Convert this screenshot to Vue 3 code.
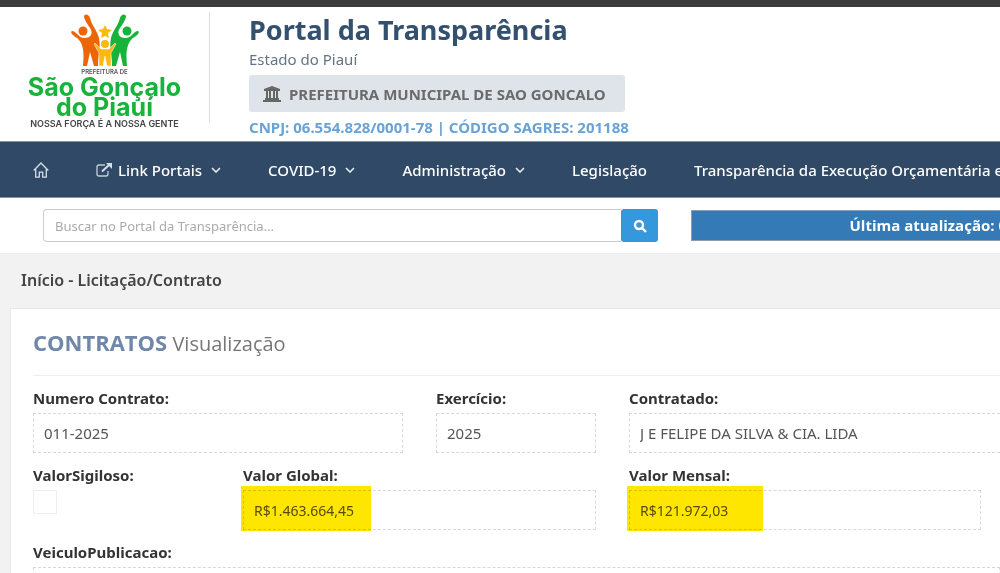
<template>
  <div class="page">
    <div class="topbar"></div>

    <header class="header">
      <div class="brand">
        <svg class="brand-mark" viewBox="0 0 68 54" role="img" aria-label="Três pessoas de braços erguidos">
          <g fill="#ec6608">
            <circle cx="12" cy="17" r="4.500" />
            <path d="M13 3c0-4 5-3 6 1 2 8 7 12 9 20 2 9-1 18-1 28h-4l-4-14-3 14h-4c1-11 1-20-4-26-2-3-7-4-8-8 1-2 3-1 5 1 3 3 5 5 9 5 7 0 8-6 5-10-3-4-5-8-6-11z" />
          </g>
          <g fill="#17b33a">
            <circle cx="56" cy="17" r="4.500" />
            <path d="M55 3c0-4-5-3-6 1-2 8-7 12-9 20-2 9 1 18 1 28h4l4-14 3 14h4c-1-11-1-20 4-26 2-3 7-4 8-8-1-2-3-1-5 1-3 3-5 5-9 5-7 0-8-6-5-10 3-4 5-8 6-11z" />
          </g>
          <g fill="#fdb913">
            <path d="M34 11l2 4 5 1-4 3 1 5-4-2-4 2 1-5-4-3 5-1z" />
            <circle cx="34" cy="30" r="4" />
            <path d="M24 29l6 6h8l6-6 1 1-5 9v13h-4l-2-10-2 10h-4V39l-5-9z" stroke="#fff" stroke-width=".5" />
          </g>
        </svg>
        <span class="brand-small">PREFEITURA DE</span>
        <span class="brand-name">São Gonçalo</span>
        <span class="brand-name">do Piauí</span>
        <span class="brand-motto">NOSSA FORÇA É A NOSSA GENTE</span>
      </div>

      <div class="heading">
        <h1>Portal da Transparência</h1>
        <p class="state">Estado do Piauí</p>
        <div class="entity">
          <svg viewBox="0 0 18 16" width="18" height="16" fill="#666" aria-hidden="true">
            <path d="M9 0l8 3v2H1V3zM3 5h2v7H3zM6 5h2v7H6zM10 5h2v7h-2zM13 5h2v7h-2zM2 12h14v2H2zM0 14h18v2H0z" />
          </svg>
          PREFEITURA MUNICIPAL DE SAO GONCALO
        </div>
        <p class="codes">CNPJ: 06.554.828/0001-78 | CÓDIGO SAGRES: 201188</p>
      </div>
    </header>

    <nav class="nav">
      <a href="#" aria-label="Início">
        <svg viewBox="0 0 16 16" width="16" height="16" fill="none" stroke="#d5dde6" stroke-width="1.300" aria-hidden="true">
          <path d="M.7 8.500L8 1l7.300 7.500M2.700 7v8.200h3.600v-5h3.400v5h3.600V7" />
        </svg>
      </a>
      <a v-for="item in menu" :key="item.text" href="#">
        <svg v-if="item.external" viewBox="0 0 16 14" width="16" height="14" aria-hidden="true">
          <path d="M9 2H3a2 2 0 0 0-2 2v7a2 2 0 0 0 2 2h7a2 2 0 0 0 2-2V8" fill="none" stroke="#c3ced9" stroke-width="1.300" />
          <path d="M6 8.500L13.500 1.500" stroke="#d5dde6" stroke-width="2" />
          <path d="M10 0h6v6z" fill="#d5dde6" />
        </svg>
        {{ item.text }}
        <svg v-if="item.dropdown" class="chevron" viewBox="0 0 10 6" width="10" height="6" aria-hidden="true">
          <path d="M1 1l4 4 4-4" fill="none" stroke="#e6ebf0" stroke-width="1.600" />
        </svg>
      </a>
    </nav>

    <div class="tools">
      <form class="search" @submit.prevent>
        <input v-model="query" type="text" aria-label="Buscar" placeholder="Buscar no Portal da Transparência..." />
        <button type="submit" aria-label="Buscar">
          <svg viewBox="0 0 14 14" width="14" height="14" fill="none" stroke="#fff" stroke-width="2.400" aria-hidden="true">
            <circle cx="6" cy="6" r="4" />
            <path d="M9 9l4 4" />
          </svg>
        </button>
      </form>
      <div class="updated"><span>Última atualização: 0</span></div>
    </div>

    <main class="content">
      <div class="breadcrumb">Início - Licitação/Contrato</div>

      <section class="panel">
        <h2><strong>CONTRATOS</strong> Visualização</h2>

        <div class="row row-contract">
          <div v-for="field in contract" :key="field.id" class="field">
            <label :for="field.id">{{ field.label }}</label>
            <input :id="field.id" type="text" :value="field.value" readonly />
          </div>
        </div>

        <div class="row row-values">
          <div class="field">
            <label for="sigiloso">ValorSigiloso:</label>
            <input id="sigiloso" type="checkbox" />
          </div>
          <div v-for="field in amounts" :key="field.id" class="field amount">
            <label :for="field.id">{{ field.label }}</label>
            <input :id="field.id" type="text" :value="field.value" readonly />
            <span class="marker" :style="{ width: field.mark + 'px' }"></span>
          </div>
        </div>

        <div class="row">
          <div class="field">
            <label for="veiculo">VeiculoPublicacao:</label>
            <input id="veiculo" class="wide" type="text" readonly />
          </div>
        </div>
      </section>
    </main>
  </div>
</template>

<script setup>
import { ref } from "vue";

const query = ref("");

// itens do menu principal
const menu = [
  { text: "Link Portais", external: true, dropdown: true },
  { text: "COVID-19", dropdown: true },
  { text: "Administração", dropdown: true },
  { text: "Legislação" },
  { text: "Transparência da Execução Orçamentária e" },
];

const contract = [
  { id: "numero", label: "Numero Contrato:", value: "011-2025" },
  { id: "exercicio", label: "Exercício:", value: "2025" },
  { id: "contratado", label: "Contratado:", value: "J E FELIPE DA SILVA & CIA. LIDA" },
];

// mark: largura do marca-texto
const amounts = [
  { id: "global", label: "Valor Global:", value: "R$1.463.664,45", mark: 130 },
  { id: "mensal", label: "Valor Mensal:", value: "R$121.972,03", mark: 136 },
];
</script>

<style>
body {
  background: #f2f2f2;
  overflow: hidden;
}
</style>

<style scoped>
* {
  box-sizing: border-box;
}

.page {
  font-family: "Noto Sans", "Open Sans", sans-serif;
  font-size: 14px;
  color: #444;
}

.topbar {
  height: 7px;
  background: #3c3c3c;
}

.header {
  display: flex;
  padding: 5px 0 4px;
  background: #fff;
}

.brand {
  display: flex;
  flex-direction: column;
  align-items: center;
  flex: none;
  width: 210px;
  height: 111px;
  border-right: 1px solid #ddd;
}

.brand > * {
  flex: none;
}

.brand-mark {
  width: 68px;
  height: 54px;
  margin-top: 2px;
}

.brand-small {
  margin-bottom: 2px;
  font: 600 6px/7px Inter, sans-serif;
  color: #555;
}

.brand-name {
  font: 700 25px/20px Inter, sans-serif;
  color: #17b33a;
}

.brand-motto {
  margin-top: 2px;
  font: 600 9px/10px Inter, sans-serif;
  color: #444;
}

.heading {
  padding-left: 39px;
  white-space: nowrap;
}

h1 {
  margin: 0;
  font-size: 27px;
  line-height: 36px;
  color: #34506f;
}

.state {
  margin: 0;
  font-size: 15px;
  line-height: 22px;
  color: #667385;
}

.entity {
  display: flex;
  align-items: center;
  gap: 8px;
  height: 37px;
  margin-top: 5px;
  padding: 0 19px 0 14px;
  border-radius: 3px;
  background: #dfe4eb;
  color: #6b6b6b;
  font-size: 15px;
  font-weight: 700;
  width: max-content;
}

.codes {
  margin: 6px 0 0;
  font-size: 15px;
  line-height: 19px;
  font-weight: 700;
  color: #69a3d6;
}

.nav {
  display: flex;
  align-items: center;
  gap: 47px;
  height: 57px;
  padding-left: 33px;
  border-top: 1px solid #8494a5;
  border-bottom: 1px solid #8494a5;
  background: #2f4966;
  white-space: nowrap;
}

.nav a {
  display: flex;
  align-items: center;
  gap: 6px;
  color: #fff;
  font-size: 15px;
  font-weight: 500;
  text-decoration: none;
}

.chevron {
  margin-left: 3px;
}

.tools {
  display: flex;
  align-items: center;
  gap: 33px;
  height: 55px;
  padding-left: 43px;
  background: #fff;
}

.search {
  display: flex;
  flex: 2;
  height: 33px;
}

.search input {
  flex: 1;
  min-width: 0;
  padding: 0 11px;
  border: 1px solid #ccc;
  border-right: 0;
  border-radius: 4px 0 0 4px;
  font: 13px "Noto Sans", sans-serif;
}

.search input::placeholder {
  color: #aaa;
}

.search button {
  display: flex;
  align-items: center;
  justify-content: center;
  width: 37px;
  padding: 0;
  border: 0;
  border-radius: 3px;
  background: #3598dc;
}

.updated {
  flex: 1;
  height: 31px;
  border: 1px solid #8d9dab;
  border-right: 0;
  background: #337ab7;
  color: #fff;
  font: 700 15px/29px "Open Sans", sans-serif;
  text-align: right;
  white-space: nowrap;
}

.updated span {
  margin-right: -7px;
}

.content {
  padding-left: 10px;
  border-top: 1px solid #eee;
}

.breadcrumb {
  padding: 15px 11px 17px;
  font-size: 16px;
  font-weight: 600;
  line-height: 22px;
}

.panel {
  padding: 19px 0 20px 22px;
  border: 1px solid #e7e7e7;
  border-right: 0;
  background: #fff;
}

h2 {
  margin: 0 0 12px;
  padding-bottom: 17px;
  border-bottom: 1px solid #eee;
  color: #777;
  font: 400 20px/28px "Open Sans", sans-serif;
}

h2 strong {
  color: #6f87a8;
  font-size: 22px;
  line-height: 28px;
}

.row {
  display: grid;
  gap: 33px;
  margin-bottom: 12px;
}

.row-contract {
  grid-template-columns: 370fr 160fr 371fr;
}

.row-values {
  grid-template-columns: 177fr 353fr 352fr;
  padding-right: 19px;
}

.field {
  position: relative;
  min-width: 0;
}

.field label {
  display: block;
  margin-bottom: 5px;
  color: #333;
  font-size: 15px;
  font-weight: 700;
  line-height: 20px;
}

.field input[type="text"] {
  display: block;
  width: 100%;
  height: 40px;
  padding: 0 10px;
  border: 1px dashed #d8d8d8;
  background: #fff;
  color: #555;
  font: 15px "Noto Sans", sans-serif;
}

.amount input[type="text"] {
  font-size: 14px;
}

.row-contract .field:last-child input,
.field .wide {
  border-right: 0;
}

.field input[type="checkbox"] {
  display: block;
  appearance: none;
  width: 24px;
  height: 24px;
  margin: 2px 0 0;
  border: 1px solid #eee;
}

/* marca-texto sobre o valor */
.marker {
  position: absolute;
  top: 21px;
  left: -2px;
  height: 45px;
  background: #ffe600;
  mix-blend-mode: multiply;
  pointer-events: none;
}
</style>
